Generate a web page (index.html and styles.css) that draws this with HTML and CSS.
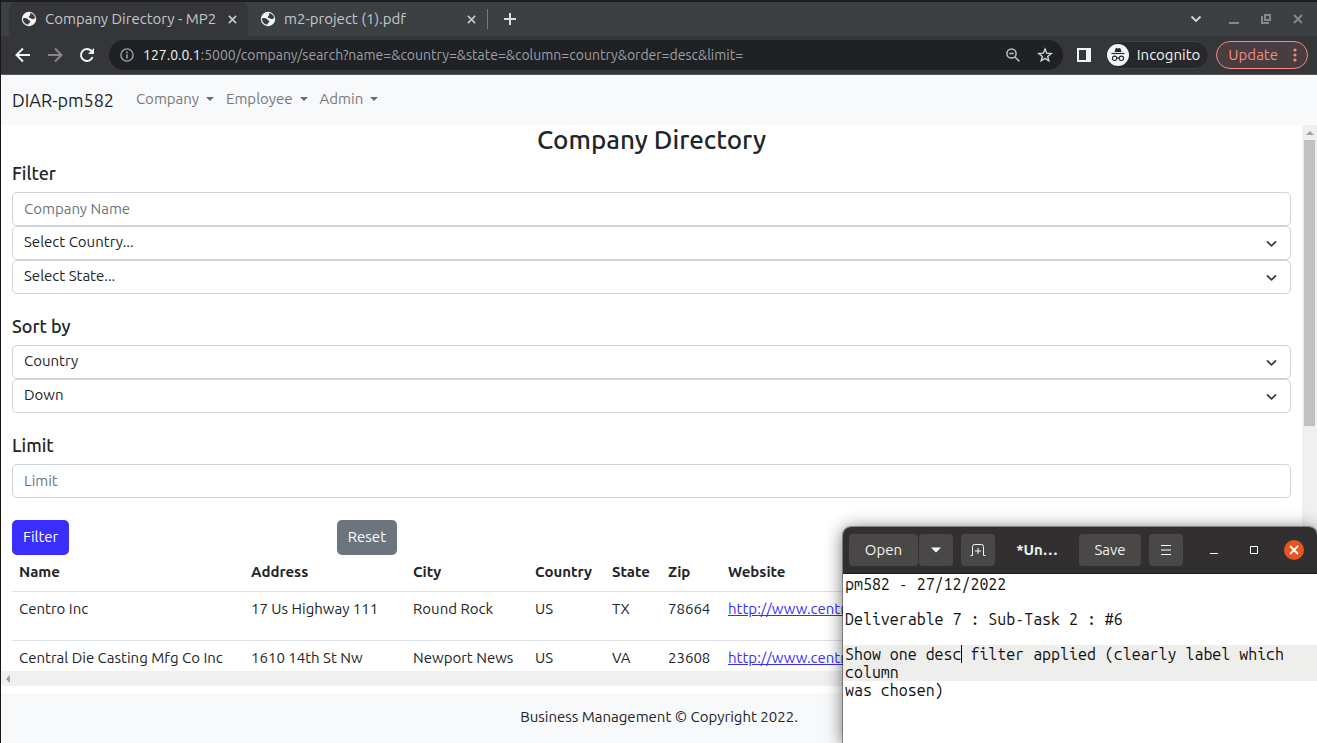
FILE: index.html
```html
<!DOCTYPE html>
<html lang="en">
<head>
<meta charset="utf-8">
<meta name="viewport" content="width=device-width, initial-scale=1">
<title>Company Directory - MP2</title>
<link rel="stylesheet" href="styles.css">
</head>
<body>
<svg class="defs" aria-hidden="true">
  <symbol id="globe" viewBox="0 0 16 16">
    <circle cx="8" cy="8" r="7.2" fill="#f1f3f4"/>
    <path d="M2 7.500c1.500-.6 3.600-.5 4.800.4.900.7.700 1.400 1.700 1.600.9.200 1.100.8.600 1.600-.6 1-1.800 1.200-1.800 2.500C4.300 13.500 1.900 11 2 7.500Z" fill="#3a3b3f"/>
    <path d="M9.200 2.100c2.500.4 4.500 2.300 4.900 4.900l-1.600.9c-.9.500-1.600-.3-2.500-.5-1.300-.3-2.300-.9-2.100-1.900.1-.8 1.100-.8 1.300-1.600Z" fill="#3a3b3f"/>
  </symbol>
  <symbol id="cross" viewBox="0 0 10 10"><path d="m1 1 8 8M9 1 1 9" fill="none" stroke="currentColor" stroke-width="1.800"/></symbol>
</svg>
<div class="screen">
  <header class="browser">
    <div class="tabs">
      <div class="tab tab-active">
        <svg class="favicon"><use href="#globe"/></svg>
        <span class="tab-title">Company Directory - MP2</span>
        <button class="tab-close" aria-label="Close tab"><svg><use href="#cross"/></svg></button>
      </div>
      <div class="tab">
        <svg class="favicon"><use href="#globe"/></svg>
        <span class="tab-title">m2-project (1).pdf</span>
        <button class="tab-close" aria-label="Close tab"><svg><use href="#cross"/></svg></button>
      </div>
      <button class="new-tab" aria-label="New tab"><svg viewBox="0 0 12 12" width="12" height="12"><path d="M6 0v12M0 6h12" stroke="currentColor" stroke-width="2"/></svg></button>
      <div class="window-tools">
        <button class="search-tabs" aria-label="Search tabs"><svg viewBox="0 0 12 8" width="12" height="8"><path d="m1.500 1.500 4.500 4.500 4.500-4.500" fill="none" stroke="currentColor" stroke-width="1.800"/></svg></button>
        <button aria-label="Minimize"><svg viewBox="0 0 10 10" width="10" height="10"><path d="M0 9h10" stroke="currentColor" stroke-width="2"/></svg></button>
        <button aria-label="Restore"><svg viewBox="0 0 10 10" width="10" height="10"><path d="M4 1h5v5H4ZM1 2v7h7" fill="none" stroke="currentColor" stroke-width="2"/></svg></button>
        <button aria-label="Close window"><svg width="10" height="10"><use href="#cross"/></svg></button>
      </div>
    </div>
    <div class="toolbar">
      <button class="nav-button" aria-label="Back"><svg viewBox="0 0 16 16" width="16" height="16"><path d="M15 8H2M8 1.500 1.500 8 8 14.500" fill="none" stroke="#f1f3f4" stroke-width="2"/></svg></button>
      <button class="nav-button" aria-label="Forward"><svg viewBox="0 0 16 16" width="16" height="16"><path d="M1 8h13M8 1.500 14.500 8 8 14.500" fill="none" stroke="#85868a" stroke-width="2"/></svg></button>
      <button class="nav-button" aria-label="Reload"><svg viewBox="0 0 16 16" width="16" height="16"><path d="M13.600 10A6 6 0 1 1 12.300 3.800L14 5.500" fill="none" stroke="#f1f3f4" stroke-width="2"/><path d="M15 1v6H9Z" fill="#f1f3f4"/></svg></button>
      <div class="omnibox">
        <svg viewBox="0 0 16 16" width="14" height="14"><circle cx="8" cy="8" r="7" fill="none" stroke="#9aa0a6" stroke-width="1.600"/><path d="M8 7v5M8 4v2" stroke="#9aa0a6" stroke-width="1.800"/></svg>
        <div class="url" role="textbox" aria-label="Address" contenteditable="true" spellcheck="false"><span class="host">127.0.0.1</span>:5000/company/search?name=&amp;country=&amp;state=&amp;column=country&amp;order=desc&amp;limit=</div>
        <button aria-label="Zoom"><svg viewBox="0 0 14 14" width="14" height="14"><circle cx="5.500" cy="5.500" r="4.600" fill="none" stroke="#bdc1c6" stroke-width="1.500"/><path d="M3.300 5.500h4.400M9 9l4.400 4.400" stroke="#bdc1c6" stroke-width="1.500"/></svg></button>
        <button aria-label="Bookmark"><svg viewBox="0 0 16 16" width="16" height="16"><path d="m8 2 1.700 4.200 4.500.3-3.500 2.900 1.100 4.400L8 11.400l-3.800 2.400 1.100-4.400L1.800 6.500l4.500-.3Z" fill="none" stroke="#d0d3d7" stroke-width="1.400"/></svg></button>
      </div>
      <button class="panel-button" aria-label="Side panel"><svg viewBox="0 0 14 14" width="14" height="14"><path d="M0 0h14v14H0ZM2 2v10h7V2Z" fill="#f1f3f4" fill-rule="evenodd"/></svg></button>
      <button class="incognito">
        <svg viewBox="0 0 22 22" width="22" height="22"><circle cx="11" cy="11" r="11" fill="#f1f3f4"/><path d="M7.500 8 8.500 4.500l1-.5 1.500.4 1.500-.4 1 .5L14.500 8Z" fill="#292a2e"/><path d="M4.500 9.500h13" stroke="#292a2e" stroke-width="1.200"/><g fill="none" stroke="#292a2e" stroke-width="1.100"><circle cx="7.600" cy="14.300" r="2.200"/><circle cx="14.400" cy="14.300" r="2.200"/><path d="M9.800 14.300c.6-.6 1.800-.6 2.400 0"/></g></svg>
        Incognito
      </button>
      <button class="update">Update
        <svg viewBox="0 0 4 14" width="4" height="14"><g fill="#f28b82"><circle cx="2" cy="2" r="1.600"/><circle cx="2" cy="7" r="1.600"/><circle cx="2" cy="12" r="1.600"/></g></svg>
      </button>
    </div>
  </header>

  <div class="page">
    <nav class="navbar">
      <a class="brand" href="#">DIAR-pm582</a>
      <a class="menu" href="#">Company</a>
      <a class="menu" href="#">Employee</a>
      <a class="menu" href="#">Admin</a>
    </nav>

    <div class="scroll-area">
      <main class="content">
        <h1>Company Directory</h1>
        <form>
          <section class="group">
            <h2>Filter</h2>
            <input class="control" type="text" placeholder="Company Name" aria-label="Company Name">
            <select class="control" aria-label="Country"><option>Select Country...</option></select>
            <select class="control" aria-label="State"><option>Select State...</option></select>
          </section>
          <section class="group">
            <h2>Sort by</h2>
            <select class="control" aria-label="Sort column"><option>Country</option></select>
            <select class="control" aria-label="Sort order"><option>Down</option></select>
          </section>
          <section class="group">
            <h2>Limit</h2>
            <input class="control" type="text" placeholder="Limit" aria-label="Limit">
          </section>
          <div class="actions">
            <div><button class="btn btn-primary" type="submit">Filter</button></div>
            <div><button class="btn btn-secondary" type="reset">Reset</button></div>
          </div>
        </form>
        <table class="companies">
          <colgroup><col class="c-name"><col class="c-address"><col class="c-city"><col class="c-country"><col class="c-state"><col class="c-zip"><col></colgroup>
          <thead><tr><th>Name</th><th>Address</th><th>City</th><th>Country</th><th>State</th><th>Zip</th><th>Website</th></tr></thead>
          <tbody>
            <tr><td>Centro Inc</td><td>17 Us Highway 111</td><td>Round Rock</td><td>US</td><td>TX</td><td>78664</td><td><a href="#">http://www.centr</a></td></tr>
            <tr><td>Central Die Casting Mfg Co Inc</td><td>1610 14th St Nw</td><td>Newport News</td><td>US</td><td>VA</td><td>23608</td><td><a href="#">http://www.centr</a></td></tr>
          </tbody>
        </table>
      </main>
      <div class="bar-v"><span class="arrow-up"></span><span class="thumb"></span></div>
      <div class="bar-h"><span class="arrow-left"></span></div>
    </div>
    <footer class="footer">Business Management © Copyright 2022.</footer>
  </div>

  <aside class="editor">
    <div class="editor-header">
      <div class="split">
        <button class="open">Open</button>
        <button class="open-more" aria-label="Recent files"><svg viewBox="0 0 10 6" width="10" height="6"><path d="M0 .5h10L5 5.500Z" fill="#fff"/></svg></button>
      </div>
      <button class="square" aria-label="New document"><svg viewBox="0 0 16 14" width="16" height="14"><path d="M.5 12.500h2v-9q0-2 2-2h7q2 0 2 2v9h2M8 5v6M5 8h6" fill="none" stroke="#f5f5f5" stroke-width="1"/></svg></button>
      <strong class="editor-title">*Un…</strong>
      <button class="save">Save</button>
      <button class="square" aria-label="Menu"><svg viewBox="0 0 10 10" width="10" height="10"><path d="M0 .5h10M0 5h10M0 9.500h10" stroke="#fff" stroke-width="1"/></svg></button>
      <div class="editor-window">
        <button aria-label="Minimize editor"><svg viewBox="0 0 8 8" width="8" height="8"><path d="M0 7.500h8" stroke="#fff"/></svg></button>
        <button aria-label="Maximize editor"><svg viewBox="0 0 8 8" width="8" height="8"><path d="M.5.500h7v7h-7Z" fill="none" stroke="#fff"/></svg></button>
        <button class="editor-close" aria-label="Close editor"><svg width="10" height="10"><use href="#cross"/></svg></button>
      </div>
    </div>
    <div class="editor-text" role="textbox" aria-multiline="true" aria-label="Document" contenteditable="true" spellcheck="false">
      <p>pm582 - 27/12/2022</p>
      <p>Deliverable 7 : Sub-Task 2 : #6</p>
      <p class="current">Show one desc filter applied (clearly label which column</p>
      <p>was chosen)</p>
    </div>
  </aside>
</div>
</body>
</html>
```

FILE: styles.css
```css
* { box-sizing: border-box; }
body { margin: 0; font: 15px/22px Ubuntu, "Noto Sans", sans-serif; color: #212529; background: #fff; }
button { font: inherit; color: inherit; background: none; border: 0; padding: 0; display: flex; align-items: center; justify-content: center; }
h1, h2, p { margin: 0; font-weight: 500; }
svg { display: block; flex: none; }
.defs { position: absolute; width: 0; height: 0; }
.screen { position: relative; display: flex; flex-direction: column; height: 100vh; overflow: hidden; border-left: 1px solid #1a1614; }

/* Browser frame */
.browser { background: #35363a; border-top: 2px solid #1e1e1e; border-bottom: 1px solid #55565a; color: #c5c7ca; }
.tabs { display: flex; height: 34px; padding-left: 8px; background: #3c4043; }
.tab { display: flex; align-items: center; gap: 8px; width: 239px; padding: 0 11px 0 12px; }
.tab-active { background: #35363a; border-radius: 8px 8px 0 0; }
.favicon { width: 16px; height: 16px; }
.tab-title { flex: 1; white-space: nowrap; overflow: hidden; }
.tab-close svg { width: 9px; height: 9px; }
.new-tab { width: 45px; height: 20px; margin: 7px 0; border-left: 1px solid #777a7d; color: #dcdee0; }
.window-tools { display: flex; margin-left: auto; padding-right: 3px; color: #85888b; }
.window-tools button { width: 32px; }
.window-tools .search-tabs { width: 44px; color: #d5d7d9; }
.toolbar { display: flex; align-items: center; height: 38px; padding: 0 9px 0 6px; }
.nav-button { width: 32px; height: 32px; }
.omnibox { display: flex; flex: 1; align-items: center; gap: 17px; height: 30px; margin-left: 6px; padding: 0 10px 0 11px; border-radius: 15px; background: #202124; }
.url { flex: 1; margin-left: -8px; font-size: 14px; color: #9aa0a6; white-space: nowrap; overflow: hidden; }
.host { color: #f1f3f4; }
.panel-button { width: 42px; height: 32px; }
.incognito { gap: 8px; height: 28px; padding: 0 8px 0 1px; border: 1px solid #3f4045; border-radius: 14px; background: #27282c; color: #f1f3f4; }
.update { gap: 15px; height: 28px; margin-left: 7px; padding: 0 10px 0 11px; border: 1px solid #f28b82; border-radius: 14px; background: #483d41; color: #f28b82; }

/* Page */
.page { display: flex; flex: 1; flex-direction: column; min-height: 0; }
.navbar { display: flex; align-items: center; gap: 12px; height: 50px; padding: 0 11px; background: #f8f9fa; }
.brand { margin-right: 10px; font-size: 18px; color: #212529; text-decoration: none; }
.menu { display: flex; align-items: center; gap: 7px; padding-bottom: 2px; color: #777879; text-decoration: none; }
.menu::after { content: ""; border: 4px solid transparent; border-top-color: #6b6c6d; border-bottom: 0; }
.scroll-area { display: grid; flex: 1; grid-template: minmax(0, 1fr) 15px / minmax(0, 1fr) 15px; min-height: 0; }
.content { overflow: hidden; padding: 0 11px; }
h1 { font-size: 26px; line-height: 30px; text-align: center; margin-bottom: 7px; }
h2 { font-size: 18px; line-height: 22px; margin-bottom: 8px; }
.group { margin-bottom: 21px; }
.control { display: block; width: 100%; height: 34px; padding: 0 11px 2px; border: 1px solid #ced4da; border-radius: 5px; background: #fff; color: #212529; font: inherit; }
.control::placeholder { color: #6c757d; opacity: 1; }
select.control { appearance: none; background: #fff url("data:image/svg+xml,%3Csvg xmlns='http://www.w3.org/2000/svg' viewBox='0 0 16 16'%3E%3Cpath fill='none' stroke='%23343a40' stroke-linecap='round' stroke-linejoin='round' stroke-width='2' d='m3 6 5 5 5-5'/%3E%3C/svg%3E") no-repeat right 12px center / 13px; }
.actions { display: grid; grid-template-columns: 1fr 3fr; padding-top: 1px; }
.actions > :last-child { padding-left: 5px; }
.btn { height: 35px; padding: 0 11px 2px; border-radius: 5px; color: #fff; }
.btn-primary { background: #3a2eff; }
.btn-secondary { background: #6c757d; }
.companies { table-layout: fixed; width: 100%; border-collapse: collapse; white-space: nowrap; }
.c-name { width: 232px; }
.c-address { width: 162px; }
.c-city { width: 122px; }
.c-country { width: 77px; }
.c-state { width: 56px; }
.c-zip { width: 60px; }
.companies th, .companies td { padding: 6px 7px 8px; text-align: left; vertical-align: top; border-bottom: 1px solid #dee2e6; }
.companies td { height: 49px; }
.companies a { color: #3a2eff; }
.bar-v, .bar-h { background: #f0f0f0; }
.bar-v { display: flex; flex-direction: column; align-items: center; padding: 6px 2px 0; gap: 5px; }
.arrow-up { border: 4px solid transparent; border-bottom-color: #a0a0a0; border-top: 0; }
.thumb { width: 11px; height: 53%; background: #c1c1c1; }
.bar-h { grid-column: 1 / -1; display: flex; align-items: center; padding-left: 5px; }
.arrow-left { border: 4px solid transparent; border-right-color: #a0a0a0; border-left: 0; }
.footer { margin-top: 7px; padding: 13px 0 15px; background: #f8f9fa; text-align: center; }

/* Editor window floating over the browser */
.editor { position: absolute; right: 0; bottom: 0; width: 474px; height: 216px; background: #fff; border-radius: 8px 8px 0 0; box-shadow: 0 2px 18px #0009, 0 0 0 1px #0005; color: #111; }
.editor-header { display: flex; align-items: center; height: 47px; padding: 0 13px 0 6px; border-bottom: 1px solid #1b1a1a; border-radius: 8px 8px 0 0; background: #322f30; color: #f1f1f1; }
.editor-header button { height: 32px; border-radius: 4px; }
.split { display: flex; gap: 1px; margin-right: 8px; }
.split button, .square, .save { background: #4a4846; }
.open { width: 69px; }
.open-more { width: 34px; }
.square { width: 34px; }
.editor-title { flex: 1; text-align: center; }
.save { width: 62px; margin-right: 8px; }
.editor-window { display: flex; align-items: center; gap: 20px; margin-left: 21px; }
.editor-header .editor-window button { width: 20px; height: 20px; }
.editor-header .editor-window .editor-close { border-radius: 10px; background: #e95420; color: #fff; }
.editor-text { padding: 1px 0; font: 16px/18px "Ubuntu Mono", "DejaVu Sans Mono", monospace; }
.editor-text p { padding: 0 2px; margin-bottom: 17px; font-weight: 400; }
.editor-text .current { position: relative; margin-bottom: 0; background: #eeeeec; }
.current::before { content: ""; position: absolute; top: 0; left: calc(2px + 13ch); width: 1px; height: 18px; background: #000; }
```
